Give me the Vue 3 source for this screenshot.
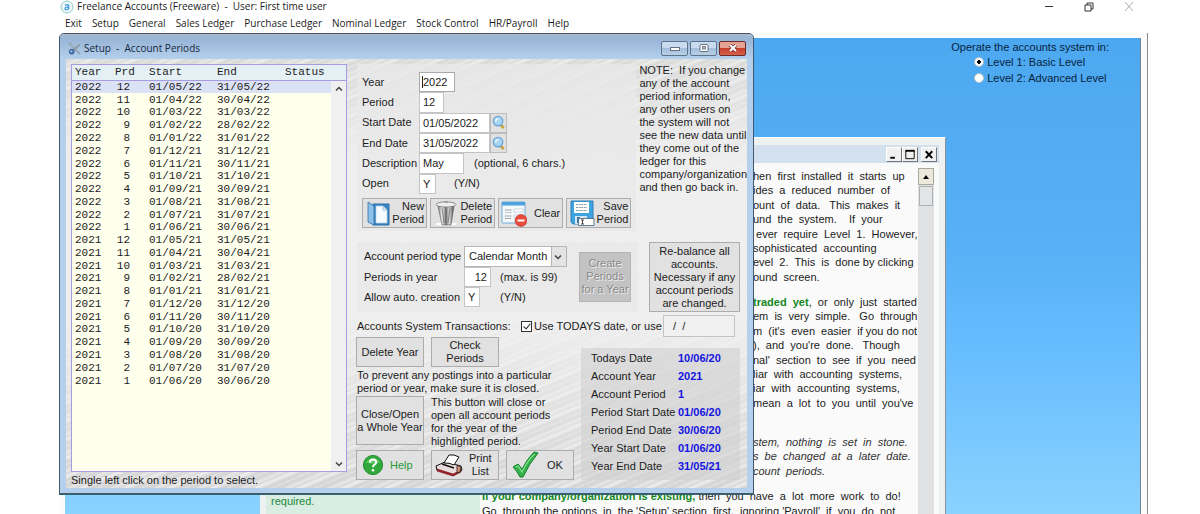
<script setup>
import { ref } from 'vue'

const menus = ['Exit', 'Setup', 'General', 'Sales Ledger', 'Purchase Ledger', 'Nominal Ledger', 'Stock Control', 'HR/Payroll', 'Help']

const ends = { 1: 31, 2: 28, 3: 31, 4: 30, 5: 31, 6: 30, 7: 31, 8: 31, 9: 30, 10: 31, 11: 30, 12: 31 }
const two = (n) => String(n).padStart(2, '0')
const periods = []
for (const year of [2022, 2021]) {
  for (let p = 12; p >= 1; p--) {
    const month = ((p + 4) % 12) + 1
    const yy = month >= 6 ? year - 2001 : year - 2000
    periods.push({ year, p, start: `01/${two(month)}/${yy}`, end: `${ends[month]}/${two(month)}/${yy}` })
  }
}

const summary = [
  ['Todays Date', '10/06/20'],
  ['Account Year', '2021'],
  ['Account Period', '1'],
  ['Period Start Date', '01/06/20'],
  ['Period End Date', '30/06/20'],
  ['Year Start Date', '01/06/20'],
  ['Year End Date', '31/05/21']
]

const note = ['NOTE:  If you change', 'any of the account', 'period information,', 'any other users on', 'the system will not', 'see the new data until', 'they come out of the', 'ledger for this', 'company/organization', 'and then go back in.']

const intro = [
  'hen  first  installed  it  starts  up',
  'ides  a  reduced  number  of',
  'ount  of  data.   This  makes  it',
  'und  the  system.    If  your',
  ' ever  require  Level  1.  However,',
  'sophisticated  accounting',
  'evel  2.  This  is  done by clicking',
  'ound  screen.'
]
const starting = [
  'em  is  very  simple.   Go  through',
  "m  (it's  even  easier  if you do not",
  "),  and  you're  done.   Though",
  "nal'  section  to  see  if  you  need",
  'liar  with  accounting  systems,',
  'iar  with  accounting  systems,',
  "mean  a  lot  to  you  until  you've"
]
const stone = ['stem,  nothing  is  set  in  stone.', 's  be  changed  at  a  later  date.', 'count  periods.']
const traded = { strong: 'traded  yet', rest: ',  or  only  just  started' }
const existing = { strong: 'If your company/organization is existing,', rest: ' then  you  have  a  lot  more  work  to  do!' }
const options = "Go  through the options  in  the 'Setup' section  first,  ignoring 'Payroll'  if  you  do  not"

const form = ref({ year: '2022', period: '12', start: '01/05/2022', end: '31/05/2022', desc: 'May', open: 'Y' })
const setup = ref({ type: 'Calendar Month', count: '12', auto: 'Y' })
const useToday = ref(true)
const otherDate = ref(' /  /')
const level = ref(1)
</script>

<template>
  <div class="app">
    <header class="titlebar">
      <svg class="logo" viewBox="0 0 14 14"><circle cx="7" cy="7" r="6" fill="#eef8fa" stroke="#8fd0c8" /><path d="M5 5.4Q7 4 8.6 5.2V9.6M8.6 7Q5 6.8 5 8.4Q5.2 10 7 9.6Q8.4 9.2 8.6 8" fill="none" stroke="#3f9be0" stroke-width="1.3" /></svg>
      <h1>Freelance Accounts (Freeware) &nbsp;-&nbsp; User: First time user</h1>
      <div class="sys">
        <button aria-label="Minimise"><svg viewBox="0 0 12 12"><path d="M2 5.5h8" stroke="#333" /></svg></button>
        <button aria-label="Restore"><svg viewBox="0 0 12 12"><path d="M2 4h6v6H2zM4 4V2h6v6H8" fill="none" stroke="#333" /></svg></button>
        <button aria-label="Close"><svg viewBox="0 0 12 12"><path d="M2 1l8 9M10 1l-8 9" stroke="#aaa" /></svg></button>
      </div>
    </header>
    <nav class="menu">
      <a v-for="m in menus" :key="m" href="#">{{ m }}</a>
    </nav>

    <main class="frame">
      <div class="desktop">
        <fieldset class="level">
          <legend>Operate the accounts system in:</legend>
          <label><input v-model="level" type="radio" name="level" :value="1" />Level 1: Basic Level</label>
          <label><input v-model="level" type="radio" name="level" :value="2" />Level 2: Advanced Level</label>
        </fieldset>

        <section class="guide">
          <div class="guide-bar">
            <button aria-label="Minimise guide"><svg viewBox="0 0 14 14"><path d="M3 10.5h5" stroke="#000" stroke-width="2" /></svg></button>
            <button aria-label="Maximise guide"><svg viewBox="0 0 14 14"><path d="M2.5 3v8.5h9V3" fill="none" stroke="#000" /><path d="M2 3h10" stroke="#000" stroke-width="2" /></svg></button>
            <button class="gap" aria-label="Close guide"><svg viewBox="0 0 14 14"><path d="M3.5 3.5l7 7.500M10.500 3.500l-7 7.500" stroke="#000" stroke-width="2" /></svg></button>
          </div>
          <div class="guide-body">
            <aside><p>required.</p></aside>
            <article>
              <div class="para eight indent">
                <p v-for="l in intro" :key="l">{{ l }}</p>
              </div>
              <div class="para eight indent">
                <p><b>{{ traded.strong }}</b>{{ traded.rest }}</p>
                <p v-for="l in starting" :key="l">{{ l }}</p>
              </div>
              <div class="para three indent">
                <p v-for="l in stone" :key="l">{{ l }}</p>
              </div>
              <div class="para two">
                <p><b>{{ existing.strong }}</b>{{ existing.rest }}</p>
                <p>{{ options }}</p>
              </div>
            </article>
            <div class="guide-scroll">
              <button aria-label="Scroll guide up"><svg viewBox="0 0 14 14"><path d="M4 9l3-4 3 4z" /></svg></button>
              <div class="thumb"></div>
            </div>
          </div>
        </section>
      </div>

      <section class="dialog">
        <header class="dlg-bar">
          <svg viewBox="0 0 14 14"><path d="M2 1l8 8 3 4-4-3-8-8z" fill="#c9ced4" stroke="#70808c" stroke-width=".7" /><path d="M12.500 2.500L5 10" stroke="#8b98a5" stroke-width="2" /><circle cx="4" cy="10.500" r="2.600" fill="#4f7fb8" stroke="#345b87" /><circle cx="3.500" cy="10" r="1" fill="#9fc1e6" /></svg>
          <h2>Setup &nbsp;-&nbsp; Account Periods</h2>
          <div class="dlg-sys">
            <button aria-label="Minimise dialog"><svg viewBox="0 0 12 10"><rect x="1.500" y="4.500" width="9" height="3" fill="#fff" stroke="#66727f" /></svg></button>
            <button aria-label="Maximise dialog"><svg viewBox="0 0 12 10"><rect x="2" y="1.500" width="8" height="7" rx="1" fill="#fff" stroke="#66727f" /><rect x="4.500" y="3.500" width="3" height="2.500" fill="#a9bdd5" stroke="#66727f" stroke-width=".8" /></svg></button>
            <button class="red" aria-label="Close dialog"><svg viewBox="0 0 12 10"><path d="M3 2l6 6M9 2L3 8" stroke="#6d2c25" stroke-width="3.600" /><path d="M3 2l6 6M9 2L3 8" stroke="#fff" stroke-width="2.200" /></svg></button>
          </div>
        </header>

        <div class="client">
          <div class="listing">
            <div class="list-box">
              <div class="table-wrap">
                <table>
                  <thead><tr><th class="c1">Year</th><th class="c2">Prd</th><th class="c3">Start</th><th class="c4">End</th><th>Status</th></tr></thead>
                  <tbody>
                    <tr v-for="(r, i) in periods" :key="i" :class="{ sel: i === 0 }">
                      <td>{{ r.year }}</td><td class="num">{{ r.p }}</td><td>{{ r.start }}</td><td>{{ r.end }}</td><td></td>
                    </tr>
                  </tbody>
                </table>
              </div>
              <div class="list-scroll">
                <button aria-label="Scroll list up"><svg viewBox="0 0 10 10"><path d="M2 6.500l3-3 3 3" /></svg></button>
                <button aria-label="Scroll list down"><svg viewBox="0 0 10 10"><path d="M2 3.500l3 3 3-3" /></svg></button>
              </div>
            </div>
            <p class="hint">Single left click on the period to select.</p>
          </div>

          <div class="work">
            <div class="upper">
              <form class="panel entry" @submit.prevent>
                <div class="fields">
                  <label for="year">Year</label>
                  <div><input id="year" v-model="form.year" class="w35 focus" /></div>
                  <label for="period">Period</label>
                  <div><input id="period" v-model="form.period" class="w24" /></div>
                  <label for="start">Start Date</label>
                  <div><input id="start" v-model="form.start" class="w71" /><button class="look" type="button" aria-label="Look up start date"><svg viewBox="0 0 16 18"><path d="M10 11l3.500 4" stroke="#c8a13c" stroke-width="3" /><circle cx="7.500" cy="7.500" r="5" fill="#a9d6f5" stroke="#6ba7d6" stroke-width="1.500" /><path d="M5 8Q5 5 8 5" fill="none" stroke="#fff" stroke-width="1.300" /></svg></button></div>
                  <label for="end">End Date</label>
                  <div><input id="end" v-model="form.end" class="w71" /><button class="look" type="button" aria-label="Look up end date"><svg viewBox="0 0 16 18"><path d="M10 11l3.500 4" stroke="#c8a13c" stroke-width="3" /><circle cx="7.500" cy="7.500" r="5" fill="#a9d6f5" stroke="#6ba7d6" stroke-width="1.500" /><path d="M5 8Q5 5 8 5" fill="none" stroke="#fff" stroke-width="1.300" /></svg></button></div>
                  <label for="desc">Description</label>
                  <div><input id="desc" v-model="form.desc" class="w45" /><span class="far">(optional, 6 chars.)</span></div>
                  <label for="open">Open</label>
                  <div><input id="open" v-model="form.open" class="w17" /><span class="near">(Y/N)</span></div>
                </div>
                <div class="tools">
                  <button type="button"><svg viewBox="0 0 26 28"><path d="M8 5h16v21H8z" fill="#3d87c4" stroke="#2d6fa8" /><path d="M11 7h7l4 4v13H11z" fill="#f6fbff" stroke="#b4cfe4" stroke-width=".7" /><path d="M18 7v4h4" fill="#d6e7f4" stroke="#8fb3cf" stroke-width=".7" /><path d="M3 3l6 4v19l-6-3z" fill="#8cc2ea" stroke="#2d6fa8" stroke-width=".8" /></svg><span>New<br />Period</span></button>
                  <button type="button"><svg viewBox="0 0 26 28"><defs><linearGradient id="bin"><stop offset="0" stop-color="#777" /><stop offset=".25" stop-color="#eee" /><stop offset=".5" stop-color="#777" /><stop offset=".7" stop-color="#ddd" /><stop offset="1" stop-color="#444" /></linearGradient></defs><ellipse cx="13" cy="25" rx="12" ry="2.500" fill="#fafafa" stroke="#ccc" stroke-width=".6" /><path d="M5 7h16l-3 19H9z" fill="url(#bin)" stroke="#555" stroke-width=".6" /><path d="M9 9l2 15M13 9v15M17 9l-2 15" stroke="#555" stroke-width=".6" /><ellipse cx="13" cy="5.500" rx="10" ry="2.600" fill="#eee" stroke="#777" stroke-width=".8" /><path d="M11 3.500q2-2 4 0" fill="none" stroke="#888" /></svg><span>Delete<br />Period</span></button>
                  <button type="button"><svg viewBox="0 0 26 28"><rect x="1" y="3" width="23" height="21" rx="1" fill="#f4f8fb" stroke="#6faedb" /><path d="M1 3h23v3.500H1z" fill="#4da3dd" /><path d="M4 11h7M4 17h7M4 19.500h6" stroke="#888" stroke-dasharray="1.500 .7" /><path d="M13 10h9v3h-9zM13 16h9v3h-9z" fill="#fff" stroke="#bcc9d3" stroke-width=".7" /><path d="M4 13.500h7" stroke="#c3c9ce" /><circle cx="20" cy="21.500" r="6" fill="#e94b3d" stroke="#b9372c" stroke-width=".6" /><path d="M16.500 21.500h7" stroke="#fff" stroke-width="2" /></svg><span>Clear</span></button>
                  <button type="button"><svg viewBox="0 0 26 28"><path d="M2 2h22v23H4l-2-2z" fill="#3ea4e0" stroke="#2a7eb5" /><path d="M5 3h15v11H5z" fill="#fff" /><path d="M7 5.500h11M7 8.500h11M7 11.500h11" stroke="#8a9aa8" stroke-dasharray="2 .6" /><path d="M6 17h12v8H6z" fill="#d7e4ee" /><path d="M8 18h3v6H8z" fill="#3b7fb1" /><path d="M9.500 19.500H25v7H9.500z" fill="#fff" stroke="#3d5f7c" stroke-width=".8" /><path d="M12 21h3M12 25h3M13.500 21v4" stroke="#222" stroke-width=".8" /></svg><span>Save<br />Period</span></button>
                </div>
              </form>
              <div class="note"><p v-for="n in note" :key="n">{{ n }}</p></div>
            </div>

            <div class="middle">
              <form class="panel auto" @submit.prevent>
                <label for="ptype">Account period type</label>
                <div class="pick"><select id="ptype" v-model="setup.type"><option>Calendar Month</option></select><svg viewBox="0 0 10 10"><path d="M2 3.500l3 3 3-3" /></svg></div>
                <label for="count">Periods in year</label>
                <div><input id="count" v-model="setup.count" class="w27" /><span class="mx">(max. is 99)</span></div>
                <label for="auto">Allow auto. creation</label>
                <div><input id="auto" v-model="setup.auto" class="w16" /><span class="yn">(Y/N)</span></div>
                <button class="create" type="button" disabled>Create<br />Periods<br />for a Year</button>
              </form>
              <button class="rebalance">Re-balance all<br />accounts.<br />Necessary if any<br />account periods<br />are changed.</button>
            </div>

            <div class="trans">
              <span class="cap">Accounts System Transactions:</span>
              <label><input v-model="useToday" type="checkbox" />Use TODAYS date, or use</label>
              <input v-model="otherDate" class="other" aria-label="Other date" />
            </div>

            <div class="lower">
              <div class="actions">
                <div class="row"><button>Delete Year</button><button>Check<br />Periods</button></div>
                <p class="prevent">To prevent any postings into a particular<br />period or year, make sure it is closed.</p>
                <div class="row closing"><button>Close/Open<br />a Whole Year</button><p>This button will close or<br />open all account periods<br />for the year of the<br />highlighted period.</p></div>
                <div class="row last">
                  <button class="help"><svg viewBox="0 0 24 24"><circle cx="12" cy="12" r="10.500" fill="#2fa93c" stroke="#1d8a2c" /><path d="M4 9Q12 0 20 9Q12 12 4 9z" fill="#5cc763" /><path d="M8.500 9.500Q8.800 6 12 6Q15.500 6.200 15.500 9Q15.400 10.600 13.600 11.700Q12 12.600 12 14.500" fill="none" stroke="#fff" stroke-width="2.200" /><circle cx="12" cy="17.700" r="1.400" fill="#fff" /></svg><span>Help</span></button>
                  <button class="print"><svg viewBox="0 0 28 24"><path d="M1 13l9-4 16 4 1 4-8 5-17-5z" fill="#e9dcdc" stroke="#111" /><path d="M2 16l16 5 8-4v2l-8 4-16-5z" fill="#b3202a" stroke="#5d0c12" stroke-width=".6" /><path d="M9 10l5-8q5-1 10 2l-5 8q-5-2.500-10-2z" fill="#fff" stroke="#111" /><path d="M7 11l12 4" stroke="#111" stroke-width="1.500" /><path d="M22 12l4 2-1 5-3 1z" fill="#d48c72" stroke="#222" stroke-width=".8" /></svg><span>Print<br />List</span></button>
                  <button class="ok"><svg viewBox="0 0 28 28"><path d="M2 16l5-3 4 5Q16 8 23 1l4 1Q18 13 12 26H9Q6 20 2 16z" fill="#35b04a" stroke="#14802b" /><path d="M4.500 16l2.500-1 4 6Q16 10 23.500 3" fill="none" stroke="#7fdd86" stroke-width="1.300" /></svg><span>OK</span></button>
                </div>
              </div>
              <dl class="summary">
                <div v-for="s in summary" :key="s[0]"><dt>{{ s[0] }}</dt><dd>{{ s[1] }}</dd></div>
              </dl>
            </div>
          </div>
        </div>
      </section>
    </main>
  </div>
</template>

<style>
html, body { margin: 0; background: #fff; }
</style>

<style scoped>
* { box-sizing: border-box; }
.app { height: 100vh; overflow: hidden; display: flex; flex-direction: column; background: #fff; color: #1c1c1c; font: 11px/13px "Liberation Sans", Arial, sans-serif; }
p, h1, h2, dl, dd { margin: 0; }
button, input, select { font: inherit; color: inherit; margin: 0; padding: 0; border-radius: 0; }
svg { display: block; flex: none; }
.titlebar { display: flex; align-items: center; height: 13px; padding: 0 64px 0 60px; font-family: "Open Sans", "Noto Sans", sans-serif; }
.titlebar h1 { flex: 1; font-size: 10px; line-height: 13px; font-weight: 400; }
.logo { width: 14px; height: 14px; margin-right: 3px; }
.sys { display: flex; gap: 27px; }
.sys button { width: 13px; height: 13px; border: 0; background: none; }
.sys svg { width: 12px; height: 12px; }
.menu { display: flex; gap: 10px; height: 20px; align-items: center; padding-left: 65px; font: 10px/14px "Open Sans", "Noto Sans", sans-serif; }
.menu a { color: #1c1c1c; text-decoration: none; white-space: nowrap; }
.frame { position: relative; flex: 1; min-height: 0; margin: 0 52px 0 60px; padding: 5px 6px 0 5px; background: #fbfbfb; border-right: 1px solid #8b8b8b; }
.desktop { position: relative; height: 100%; overflow: hidden; border-right: 1px solid #77838f; background: linear-gradient(#4ca8f0, #58b1f6 45%, #66bcfe 65%, #8ad2ff); }
.level { position: absolute; top: 2px; right: 31px; border: 0; margin: 0; padding: 0; display: flex; flex-direction: column; color: #06233f; }
.level legend { padding: 0; line-height: 14px; }
.level label { display: flex; align-items: center; height: 16px; padding-left: 23px; white-space: nowrap; }
.level input { appearance: none; width: 10px; height: 10px; margin-right: 3px; border-radius: 50%; background: #fff; border: 1px solid #b9c3cc; }
.level input:checked { background: radial-gradient(circle, #000 0 2px, #fff 2px); }

.guide { position: absolute; left: 195px; top: 99px; width: 686px; bottom: 0; padding: 7px 6px 0 6px; background: #eef1f2; border-top: 1px solid #fff; border-right: 1px solid #8c9197; display: flex; flex-direction: column; }
.guide-bar { display: flex; justify-content: flex-end; align-items: center; height: 18px; padding-right: 2px; background: #d3e0ee; }
.guide-bar button { width: 16px; height: 15px; background: #f0f0f0; border: 1px solid; border-color: #fff #777 #777 #fff; }
.guide-bar .gap { margin-left: 3px; }
.guide-bar svg { width: 14px; height: 13px; }
.guide-body { flex: 1; min-height: 0; display: flex; background: #fafafa; overflow: hidden; }
.guide-body aside { width: 214px; flex: none; background: #d9ede2; color: #1d8a3a; padding: 332px 5px 0; }
.guide-body article { flex: 1; min-width: 0; padding: 6px 0 0 2px; white-space: pre; }
.para { display: flex; flex-direction: column; margin-bottom: 11px; }
.para p { flex: 1 1 0; line-height: 14px; white-space: pre; }
.indent { padding-left: 271px; }
.eight { height: 115px; }
.three { height: 43px; margin-top: 25px; font-style: italic; color: #333; }
.two { height: 29px; }
.para b { color: #13871c; }
.guide-scroll { flex: none; width: 16px; margin: 5px 5px 0 0; background: #dfe1e2; }
.guide-scroll button { display: block; width: 16px; height: 17px; background: #ece9dc; border: 1px solid #a9a89e; }
.guide-scroll svg { width: 14px; height: 14px; }
.thumb { height: 20px; margin: 1px; background: #e2e4e5; border: 1px solid #aeb1b4; }

.dialog { position: absolute; left: -1px; top: 0; width: 695px; padding: 0 6px 5px; background: #b4d0ec; border: 1px solid #44586a; border-radius: 5px 5px 0 0; box-shadow: 0 1px 0 #2f6670; }
.dlg-bar { display: flex; align-items: center; height: 25px; margin: 0 -6px; padding: 3px 7px 0 8px; background: linear-gradient(#a9b9cc, #98b5d8 20%, #b4d0ec); border-radius: 4px 4px 0 0; font-family: "Open Sans", "Noto Sans", sans-serif; }
.dlg-bar > svg { width: 13px; height: 13px; margin-right: 3px; }
.dlg-bar h2 { flex: 1; font-size: 10px; line-height: 14px; font-weight: 400; color: #16283c; }
.dlg-sys { display: flex; gap: 2px; }
.dlg-sys button { width: 27px; height: 15px; display: flex; justify-content: center; align-items: center; border: 1px solid #5f748b; border-radius: 2px; background: linear-gradient(#c9dbef 45%, #a4bedb 50%, #b9cfe7); }
.dlg-sys .red { border-color: #6d2c25; background: linear-gradient(#e5a294 45%, #c8402c 50%, #d4634c); }
.dlg-sys svg { width: 12px; height: 10px; }
.client { display: flex; padding: 5px 0 1px 5px; background: linear-gradient(rgba(232,232,232,.4), rgba(240,240,240,.95) 25%, rgba(240,240,240,.95) 60%, rgba(228,228,228,.2)), repeating-linear-gradient(157deg, #d2d2d2 0 3px, #e8e8e8 5px, #d6d6d6 8px, #f1f1f1 10px, #cdcdcd 14px, #e2e2e2 17px); }
.listing { width: 276px; flex: none; margin-right: 9px; display: flex; flex-direction: column; }
.list-box { height: 408px; display: flex; border: 1px solid #a99be0; background: #ffffee; position: relative; font: 11px/12px "Liberation Mono", "Courier New", monospace; }
.table-wrap { flex: 1; }
table { width: 274px; height: 322px; border-collapse: collapse; table-layout: fixed; }
th, td { padding: 0 0 0 3px; text-align: left; font-weight: 400; white-space: nowrap; }
th { height: 15px; background: #e4f0f4; border-bottom: 1px solid #a99be0; }
.c1 { width: 40px; } .c2 { width: 34px; } .c3 { width: 68px; } .c4 { width: 68px; }
.num { text-align: right; padding-right: 16px; }
.sel td { background: #dce2f6; }
.list-scroll { position: absolute; right: 0; top: 16px; bottom: 0; width: 15px; background: #f0f0f0; display: flex; flex-direction: column; justify-content: space-between; }
.list-scroll button { width: 15px; height: 15px; border: 0; background: none; display: flex; align-items: center; justify-content: center; }
.list-scroll svg, .pick svg { width: 10px; height: 10px; fill: none; stroke: #444; stroke-width: 1.500; }
.hint { margin-top: 2px; line-height: 13px; }
.work { flex: 1; min-width: 0; white-space: nowrap; }
.upper, .middle, .lower { display: flex; }
.panel { width: 281px; margin: 0 0 0 1px; background: rgba(232, 232, 232, .75); }
.entry { padding: 8px 5px 3px; }
.fields { display: grid; grid-template-columns: 57px 1fr; height: 122px; grid-template-rows: repeat(6, 1fr); align-items: center; }
.fields > div { display: flex; align-items: center; height: 100%; }
input:not([type]) { height: 100%; border: 1px solid #c4c4c4; background: #fff; padding: 0 3px; outline: 0; }
.w35 { width: 36px; } .w24 { width: 25px; } .w71 { width: 71px; } .w45 { width: 45px; } .w17 { width: 17px; }
input.focus { border-color: #aaa; background: linear-gradient(#222, #222) 2px 3px / 1px 12px no-repeat #fff; }
.look { width: 17px; height: 100%; border: 1px solid #bcbcbc; background: #e0e0e0; }
.look svg { width: 15px; height: 17px; }
.far { margin-left: 10px; } .near { margin-left: 18px; }
.tools { display: flex; gap: 3px; margin-top: 4px; }
.work button { background: #e1e1e1; border: 1px solid #acacac; line-height: 13px; text-align: center; }
.tools button { flex: 1; height: 30px; display: flex; align-items: center; justify-content: space-between; padding: 0 2px; }
.tools button svg { width: 26px; height: 28px; }
.tools span { text-align: right; }
.work .look { border-color: #bcbcbc; }
.note { height: 127px; margin-left: 3px; display: flex; flex-direction: column; white-space: pre; }
.note p { flex: 1 1 0; }
.middle { margin-top: 11px; gap: 11px; }
.auto { display: grid; grid-template-columns: 100px 110px 50px; grid-template-rows: 21px 20px 20px; padding: 4px 0 5px 7px; align-items: center; }
.auto label { grid-column: 1; }
.auto > div { grid-column: 2; display: flex; align-items: center; height: 100%; }
.auto .create { grid-column: 3; grid-row: 1 / 4; height: 50px; margin-left: 5px; background: #c3c3c3; border-color: #b5b5b5; color: #8a8a8a; text-shadow: 1px 1px 0 #eee; width: 52px; }
.pick { width: 103px; position: relative; border: 1px solid #b5b5b5; background: #fff; }
.pick select { flex: 1; width: 100%; height: 100%; appearance: none; border: 0; background: linear-gradient(90deg, #fff 86px, #b5b5b5 86px 87px, #e3e3e3 87px); padding-left: 4px; }
.pick svg { position: absolute; right: 3px; pointer-events: none; }
.w27 { width: 27px; text-align: right; } .w16 { width: 16px; }
.mx { margin-left: 9px; } .yn { margin-left: 20px; }
.rebalance { width: 91px; height: 70px; }
.trans { display: flex; align-items: center; height: 22px; margin-top: 3px; padding-left: 1px; }
.cap { width: 164px; }
.trans label { display: flex; align-items: center; width: 142px; }
.trans input[type="checkbox"] { appearance: none; position: relative; width: 11px; height: 11px; margin-right: 2px; border: 1px solid #333; background: #fff; }
.trans input[type="checkbox"]:checked::after { content: ""; position: absolute; left: 3px; top: 0; width: 3px; height: 6px; border: solid #222; border-width: 0 1px 1px 0; transform: rotate(40deg); }
.trans .other { width: 72px; height: 22px; background: #f0f0f0; white-space: pre; padding-left: 6px; }
.lower { justify-content: space-between; padding-right: 7px; }
.actions { width: 218px; }
.row { display: flex; gap: 7px; }
.row > button { width: 68px; height: 30px; }
.prevent { margin: 2px 0 1px 1px; }
.row.closing > button { height: 49px; }
.closing { height: 52px; }
.last { margin-top: 2px; }
.last button { display: flex; align-items: center; padding: 0 5px; }
.last svg { width: 24px; height: 24px; }
.last .help { color: #2a9a38; gap: 6px; }
.last .help svg { width: 22px; height: 22px; }
.last .print { padding: 0 3px; gap: 6px; }
.last .print svg { width: 28px; }
.last .ok { gap: 8px; padding: 0 4px; }
.last .ok svg { width: 28px; height: 28px; }
.summary { width: 159px; margin-top: 11px; padding: 1px 0 4px 10px; background: rgba(208, 208, 208, .6); }
.summary div { display: flex; height: 18px; align-items: center; }
.summary dt { width: 87px; }
.summary dd { font-weight: 700; color: #1414e0; }
</style>
